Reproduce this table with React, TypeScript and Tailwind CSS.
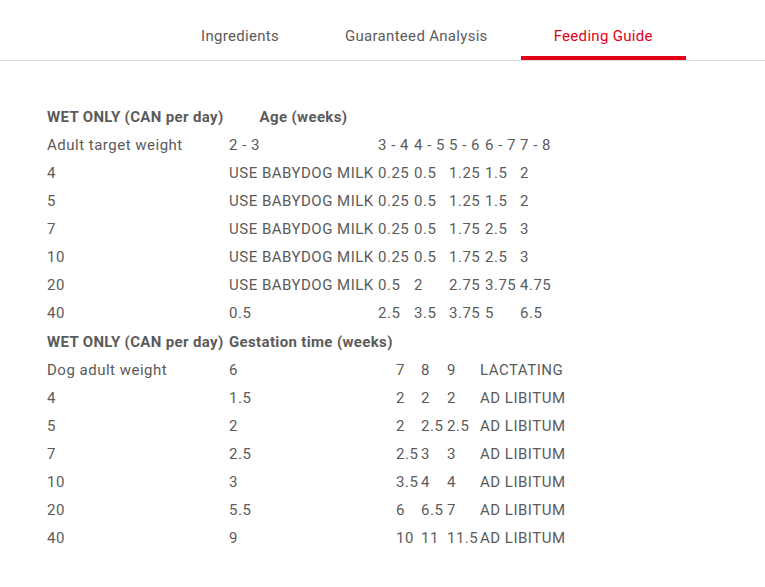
import React from "react";

const tabs = ["Ingredients", "Guaranteed Analysis", "Feeding Guide"];

const ageRows = [
  ["Adult target weight", "2 - 3", "3 - 4", "4 - 5", "5 - 6", "6 - 7", "7 - 8"],
  ["4", "USE BABYDOG MILK", "0.25", "0.5", "1.25", "1.5", "2"],
  ["5", "USE BABYDOG MILK", "0.25", "0.5", "1.25", "1.5", "2"],
  ["7", "USE BABYDOG MILK", "0.25", "0.5", "1.75", "2.5", "3"],
  ["10", "USE BABYDOG MILK", "0.25", "0.5", "1.75", "2.5", "3"],
  ["20", "USE BABYDOG MILK", "0.5", "2", "2.75", "3.75", "4.75"],
  ["40", "0.5", "2.5", "3.5", "3.75", "5", "6.5"],
];

const gestationRows = [
  ["Dog adult weight", "6", "7", "8", "9", "LACTATING"],
  ["4", "1.5", "2", "2", "2", "AD LIBITUM"],
  ["5", "2", "2", "2.5", "2.5", "AD LIBITUM"],
  ["7", "2.5", "2.5", "3", "3", "AD LIBITUM"],
  ["10", "3", "3.5", "4", "4", "AD LIBITUM"],
  ["20", "5.5", "6", "6.5", "7", "AD LIBITUM"],
  ["40", "9", "10", "11", "11.5", "AD LIBITUM"],
];

const App = () => (
  <div
    className="w-[765px] h-[587px] bg-white text-[#5b5b5b] overflow-hidden"
    style={{ fontFamily: "Roboto, 'Liberation Sans', sans-serif" }}
  >
    {/* Tabs */}
    <div className="border-b border-[#dcdcdc] h-[61px] flex pl-[168px]">
      {tabs.map((t, i) => (
        <div
          key={t}
          className={
            i === 2
              ? "relative h-[60px] px-[33px] pt-[25px] text-[15px] text-[#e2001a] tracking-[0.3px]"
              : "relative h-[60px] px-[33px] pt-[25px] text-[15px] text-[#5b5b5b] tracking-[0.3px]"
          }
        >
          {t}
          {i === 2 && (
            <div className="absolute left-0 right-0 bottom-0 h-[4px] bg-[#e2001a]" />
          )}
        </div>
      ))}
    </div>

    {/* Feeding tables */}
    <div className="pl-[47px] pt-[42px] text-[15px] tracking-[0.5px]">
      <div className="grid grid-cols-[182px_149px_36px_35px_36px_35px_auto] auto-rows-[28px] items-center">
        <div className="font-bold whitespace-nowrap tracking-[0.35px]">WET ONLY (CAN per day)</div>
        <div className="font-bold text-center whitespace-nowrap tracking-[0.35px]">Age (weeks)</div>
        <div className="col-span-5" />
        {ageRows.map((r, ri) =>
          r.map((c, ci) => (
            <div key={ri + "-" + ci} className="whitespace-nowrap">
              {c}
            </div>
          ))
        )}
      </div>
      <div className="grid grid-cols-[182px_167px_25px_26px_33px_auto] auto-rows-[28px] items-center mt-px">
        <div className="font-bold whitespace-nowrap tracking-[0.35px]">WET ONLY (CAN per day)</div>
        <div className="font-bold whitespace-nowrap tracking-[0.35px]">Gestation time (weeks)</div>
        <div className="col-span-4" />
        {gestationRows.map((r, ri) =>
          r.map((c, ci) => (
            <div key={ri + "-" + ci} className="whitespace-nowrap">
              {c}
            </div>
          ))
        )}
      </div>
    </div>
  </div>
);

export default App;
